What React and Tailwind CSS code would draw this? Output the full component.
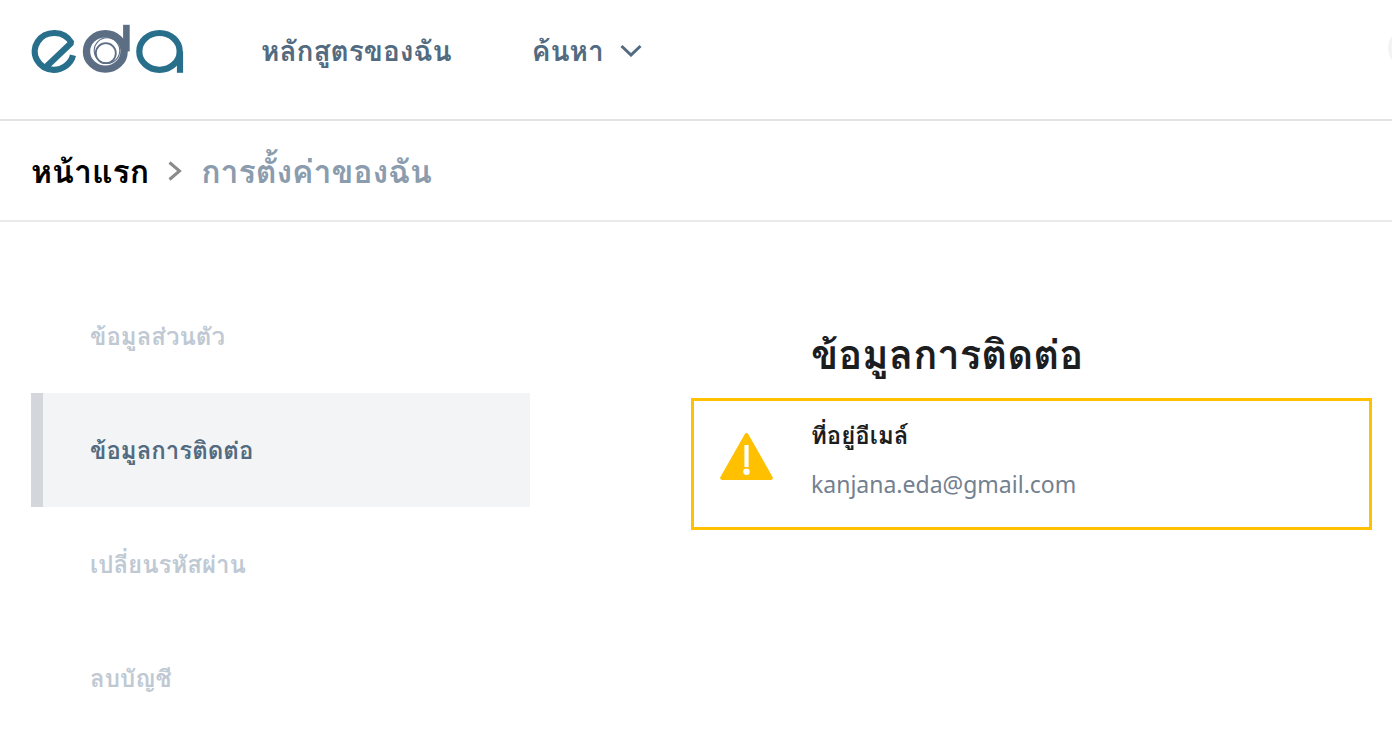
import React from 'react';

const menuItems = [
  { label: 'ข้อมูลส่วนตัว', href: '#profile' },
  { label: 'ข้อมูลการติดต่อ', href: '#contact', active: true },
  { label: 'เปลี่ยนรหัสผ่าน', href: '#password' },
  { label: 'ลบบัญชี', href: '#delete' },
];

const Logo = () => (
  <svg width="154" height="50" viewBox="0 0 154 50" fill="none" role="img" aria-label="eda">
    {/* e */}
    <path d="M43 31.2C41 39.6 32.6 45.8 23.5 45.8A19.5 18.4 0 1 1 41.4 18.7L17 42" stroke="#286f8c" strokeWidth="6.2" strokeLinejoin="bevel" />
    {/* d with the swirl inside */}
    <ellipse cx="75.3" cy="27.4" rx="18.8" ry="17.7" stroke="#5b6e84" strokeWidth="7.4" />
    <path d="M96.4 0.8V27.4" stroke="#5b6e84" strokeWidth="6.6" />
    <circle cx="77" cy="26.6" r="12.8" stroke="#5b6e84" strokeWidth="1.1" />
    <circle cx="75.8" cy="29.2" r="10" stroke="#5b6e84" strokeWidth="1.8" />
    {/* a */}
    <ellipse cx="129.5" cy="27.4" rx="20.2" ry="18.4" stroke="#286f8c" strokeWidth="6.2" />
    <path d="M150 27.4V48.8" stroke="#286f8c" strokeWidth="6.2" />
  </svg>
);

const Header = () => (
  <header className="flex h-[121px] items-start overflow-hidden border-b-2 border-[#e2e3e4] pl-[30px]">
    <a href="#home" className="mt-6 block shrink-0">
      <Logo />
    </a>
    <nav className="mt-8 ml-[77px] flex items-center gap-20 text-[28px] leading-9 font-bold text-[#526b80]">
      <a href="#courses">หลักสูตรของฉัน</a>
      <button type="button" className="flex items-center gap-4">
        ค้นหา
        <svg width="22" height="14" viewBox="0 0 22 14" fill="none" stroke="currentColor" strokeWidth="3">
          <path d="M1.5 3 11 12 20.5 3" />
        </svg>
      </button>
    </nav>
    <button type="button" aria-label="บัญชี" className="mt-7 -mr-9 ml-auto size-10 shrink-0 rounded-full bg-[#f3f3f4]" />
  </header>
);

const Breadcrumb = () => (
  <nav className="flex h-[101px] items-center gap-[19px] border-b-2 border-[#e9eaec] px-[31px] text-[32px] leading-10 font-bold">
    <a href="#home" className="text-black">หน้าแรก</a>
    <svg width="14" height="20" viewBox="0 0 14 20" fill="none" stroke="#8a8a8a" strokeWidth="3">
      <path d="M1.5 1.5 11.5 10 1.5 18.5" />
    </svg>
    <span className="text-[#8a9cad]">การตั้งค่าของฉัน</span>
  </nav>
);

const SideMenu = () => (
  <aside className="mt-[57px] w-[499px] shrink-0">
    {menuItems.map((item) => (
      <a
        key={item.label}
        href={item.href}
        className={`flex h-[114px] items-center border-l-[12px] pl-[47px] text-2xl leading-8 font-bold ${
          item.active ? 'border-[#d3d7dc] bg-[#f3f4f6] text-[#526b80]' : 'border-transparent text-[#bfc9d3]'
        }`}
      >
        {item.label}
      </a>
    ))}
  </aside>
);

const ContactInfo = () => (
  <section className="mt-[108px] ml-[161px] flex-1">
    <h1 className="pl-[120px] text-[40px] leading-[48px] font-bold text-[#1c1d1f]">ข้อมูลการติดต่อ</h1>
    <div className="mt-5 flex h-[132px] items-start border-[3px] border-[#ffc000] pl-[26px]">
      <svg className="mt-8 shrink-0" width="54" height="48" viewBox="0 0 54 48">
        <path d="M24.7 1.2a2 2 0 0 1 3.6 0L52.7 44.2a2 2 0 0 1-1.8 2.8H2.1a2 2 0 0 1-1.8-2.8z" fill="#ffc000" />
        <path d="M24.4 12h4.2V34h-4.2z" fill="#fff" />
        <circle cx="26.5" cy="38.8" r="3.2" fill="#fff" />
      </svg>
      <div className="mt-[18px] ml-[37px]">
        <h2 className="text-2xl leading-8 font-bold text-[#1c1d1f]">ที่อยู่อีเมล์</h2>
        <p className="mt-[17px] text-[23px] leading-8 text-[#73808f]">kanjana.eda@gmail.com</p>
      </div>
    </div>
  </section>
);

export default function App() {
  return (
    <div className="min-h-screen overflow-hidden bg-white font-['Noto_Sans',Loma,'Noto_Sans_Thai',sans-serif]">
      <Header />
      <Breadcrumb />
      <main className="flex pr-5 pl-[31px]">
        <SideMenu />
        <ContactInfo />
      </main>
    </div>
  );
}
